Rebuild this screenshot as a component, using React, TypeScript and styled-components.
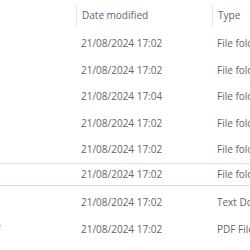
import styled, { createGlobalStyle } from "styled-components";

type FileRow = {
  name: string;
  modified: string;
  type: string;
  selected?: boolean;
};

const rows: FileRow[] = [
  { name: "", modified: "21/08/2024 17:02", type: "File folder" },
  { name: "", modified: "21/08/2024 17:02", type: "File folder" },
  { name: "", modified: "21/08/2024 17:04", type: "File folder" },
  { name: "", modified: "21/08/2024 17:02", type: "File folder" },
  { name: "", modified: "21/08/2024 17:02", type: "File folder" },
  { name: "", modified: "21/08/2024 17:02", type: "File folder", selected: true },
  { name: "", modified: "21/08/2024 17:02", type: "Text Document" },
  { name: "f", modified: "21/08/2024 17:02", type: "PDF File" },
];

const GlobalStyle = createGlobalStyle`
  html, body {
    margin: 0;
    padding: 0;
    background: #ffffff;
  }
  body {
    font-family: "Open Sans", "Noto Sans", "Liberation Sans", sans-serif;
    font-size: 10px;
    overflow: hidden;
  }
`;

const List = styled.div`
  width: 250px;
  height: 250px;
  overflow: hidden;
  background: #ffffff;
`;

const HeaderRow = styled.div`
  display: grid;
  grid-template-columns: 76px 136px 1fr;
  height: 30px;
  align-items: center;
`;

const HeaderCell = styled.div<{ $divider?: boolean }>`
  height: 22px;
  display: flex;
  align-items: center;
  padding-left: 5px;
  border-left: 1px solid ${(p) => (p.$divider ? "#e8e8e8" : "transparent")};
  color: #56657a;
  white-space: nowrap;
  overflow: hidden;
`;

const Row = styled.div<{ $selected?: boolean }>`
  display: grid;
  grid-template-columns: 76px 136px 1fr;
  align-items: center;
  box-sizing: border-box;
  border-top: 1px solid ${(p) => (p.$selected ? "#cfe3f5" : "transparent")};
  border-bottom: 1px solid ${(p) => (p.$selected ? "#cfe3f5" : "transparent")};
  height: ${(p) => (p.$selected ? "23.5px" : "26.5px")};
  margin-bottom: ${(p) => (p.$selected ? "3px" : "0")};
`;

const NameCell = styled.div`
  color: #7a8aa0;
  margin-left: -3px;
  white-space: nowrap;
  overflow: hidden;
`;

const Cell = styled.div`
  padding-left: 5px;
  color: #666666;
  white-space: nowrap;
  overflow: hidden;
`;

const App = () => {
  return (
    <List>
      <GlobalStyle />
      <HeaderRow>
        <HeaderCell />
        <HeaderCell $divider>Date modified</HeaderCell>
        <HeaderCell $divider>Type</HeaderCell>
      </HeaderRow>
      {rows.map((r, i) => (
        <Row key={i} $selected={r.selected}>
          <NameCell>{r.name}</NameCell>
          <Cell>{r.modified}</Cell>
          <Cell>{r.type}</Cell>
        </Row>
      ))}
    </List>
  );
};

export default App;
